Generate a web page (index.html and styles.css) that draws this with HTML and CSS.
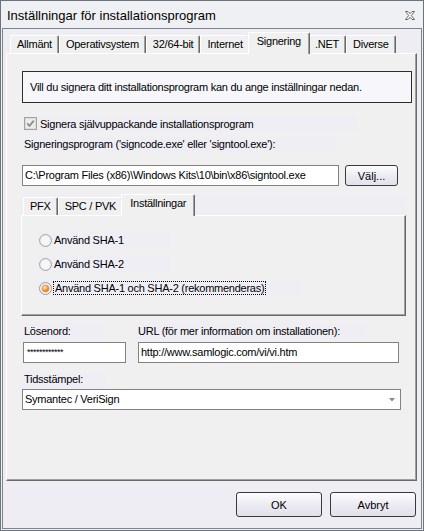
FILE: index.html
```html
<!DOCTYPE html>
<html lang="sv">

<head>
  <meta charset="UTF-8">
  <title>Inställningar för installationsprogram</title>
  <link rel="stylesheet" href="styles.css">
</head>

<body>
  <div class="window">
    <div class="titlebar">
      <span class="title">Inställningar för installationsprogram</span>
      <svg class="close" width="10" height="9" viewBox="0 0 10 9">
        <path d="M0.5 0.5h2.5l2 2.2 2-2.2h2.5l-3.2 4 3.2 4h-2.5l-2-2.2-2 2.2h-2.5l3.2-4z" fill="#fbfbfb" stroke="#6a6a6a" stroke-linejoin="round"/>
      </svg>
    </div>
    <div class="client">
      <div class="tabs">
        <div class="tab">Allmänt</div>
        <div class="tab">Operativsystem</div>
        <div class="tab">32/64-bit</div>
        <div class="tab">Internet</div>
        <div class="tab tab-active">Signering</div>
        <div class="tab">.NET</div>
        <div class="tab">Diverse</div>
      </div>
      <div class="panel">
        <div class="info">Vill du signera ditt installationsprogram kan du ange inställningar nedan.</div>
        <div class="check">
          <svg width="13" height="13" viewBox="0 0 13 13">
            <rect x="0.5" y="0.5" width="12" height="12" fill="#ececec" stroke="#a2a2a2"/>
            <rect x="1.5" y="1.5" width="10" height="10" fill="none" stroke="#dcdcdc"/>
            <path d="M3.2 6.3l2.3 2.5 4.3-5.2" fill="none" stroke="#8d8d8d" stroke-width="1.8"/>
          </svg>
          <span>Signera självuppackande installationsprogram</span>
        </div>
        <div class="label label-sign">Signeringsprogram ('signcode.exe' eller 'signtool.exe'):</div>
        <div class="path-row">
          <div class="field field-path">C:\Program Files (x86)\Windows Kits\10\bin\x86\signtool.exe</div>
          <button class="btn btn-small">Välj...</button>
        </div>
        <div class="subtabs">
          <div class="tab">PFX</div>
          <div class="tab">SPC / PVK</div>
          <div class="tab tab-active">Inställningar</div>
        </div>
        <div class="subpanel">
          <div class="radio">
            <svg width="13" height="13" viewBox="0 0 13 13">
              <circle cx="6.5" cy="6.5" r="6" fill="#e9e9e9" stroke="#a7a7a7"/>
              <circle cx="6.5" cy="6.5" r="4.5" fill="#f6f6f6"/>
            </svg>
            <span>Använd SHA-1</span>
          </div>
          <div class="radio">
            <svg width="13" height="13" viewBox="0 0 13 13">
              <circle cx="6.5" cy="6.5" r="6" fill="#e9e9e9" stroke="#a7a7a7"/>
              <circle cx="6.5" cy="6.5" r="4.5" fill="#f6f6f6"/>
            </svg>
            <span>Använd SHA-2</span>
          </div>
          <div class="radio radio-wide">
            <svg width="13" height="13" viewBox="0 0 13 13">
              <defs>
                <radialGradient id="dot" cx="0.4" cy="0.35" r="0.7">
                  <stop offset="0" stop-color="#ffe7c4"/>
                  <stop offset="0.5" stop-color="#f7a048"/>
                  <stop offset="1" stop-color="#d85e10"/>
                </radialGradient>
              </defs>
              <circle cx="6.5" cy="6.5" r="6" fill="#f2f2f2" stroke="#9a9a9a"/>
              <circle cx="6.5" cy="6.5" r="3.6" fill="url(#dot)" stroke="#e7a060" stroke-width="0.8"/>
            </svg>
            <span class="focus">Använd SHA-1 och SHA-2 (rekommenderas)</span>
          </div>
        </div>
        <div class="cred-row">
          <div class="cred-col">
            <div class="label label-pass">Lösenord:</div>
            <div class="field field-pass"><span class="stars">************</span></div>
          </div>
          <div class="cred-col">
            <div class="label label-url">URL (för mer information om installationen):</div>
            <div class="field field-url">http://www.samlogic.com/vi/vi.htm</div>
          </div>
        </div>
        <div class="label label-time">Tidsstämpel:</div>
        <div class="field select">
          <span>Symantec / VeriSign</span>
          <svg width="6" height="4" viewBox="0 0 6 4"><path d="M0 0h6l-3 3.5z" fill="#8a8a8a"/></svg>
        </div>
      </div>
      <div class="footer">
        <button class="btn">OK</button>
        <button class="btn">Avbryt</button>
      </div>
    </div>
  </div>
</body>

</html>
```

FILE: styles.css
```css
*,
*::before,
*::after {
  margin: 0;
  padding: 0;
  box-sizing: border-box;
}
body {
  font-family: "Liberation Sans", Arial, sans-serif;
  font-size: 11px;
  letter-spacing: -0.25px;
  color: #000;
  background: #fff;
}
.window {
  display: flex;
  flex-direction: column;
  width: 424px;
  height: 531px;
  padding: 0 1px 1px;
  border: 1px solid #6b747d;
  background: #eff0f3;
}
.titlebar {
  display: flex;
  align-items: center;
  justify-content: space-between;
  height: 27px;
  padding: 2px 7px 0 5px;
}
.title {
  font-size: 13px;
  letter-spacing: 0;
}
.client {
  flex: 1;
  display: flex;
  flex-direction: column;
  border: 1px solid #7b848d;
  background: #eeedf4;
}
.tabs,
.subtabs {
  display: flex;
  align-items: flex-end;
}
.tabs {
  height: 24px;
  margin: 0 4px 0 3px;
  padding-left: 4px;
}
.tab {
  height: 18px;
  padding: 0 6px;
  line-height: 16px;
  border-top: 1px solid #fff;
  border-left: 1px solid #fff;
  border-right: 1px solid #696969;
  border-radius: 2px 2px 0 0;
  box-shadow: inset -1px 0 #a0a0a0;
  background: #f0f0f0;
}
.tab-active {
  position: relative;
  z-index: 1;
  height: 22px;
  margin: 0 -2px -1px;
  padding: 0 8px 4px;
  line-height: 17px;
}
.panel {
  height: 428px;
  margin: 0 4px 0 3px;
  border: 1px solid;
  border-color: #fff #696969 #696969 #fff;
  box-shadow: inset -1px -1px #a0a0a0;
  background: #f0f0f0;
}
.info {
  width: 390px;
  height: 32px;
  margin: 17px 0 0 15px;
  padding-left: 7px;
  line-height: 30px;
  border: 1px solid #2e2e2e;
  background: #f7f7fb;
}
.check,
.radio {
  display: flex;
  align-items: center;
  padding-left: 2px;
  background: #efeef5;
}
.check {
  width: 335px;
  height: 15px;
  margin: 13px 0 0 15px;
  gap: 3px;
}
.label {
  height: 15px;
  margin-left: 15px;
  padding-left: 2px;
  line-height: 15px;
  background: #efeef5;
}
.label-sign {
  width: 313px;
  margin-top: 6px;
}
.path-row {
  display: flex;
  gap: 6px;
  margin: 13px 0 0 15px;
}
.field {
  height: 21px;
  padding-left: 2px;
  line-height: 19px;
  border: 1px solid #828282;
  background: #fff;
  white-space: nowrap;
  overflow: hidden;
}
.field-path {
  width: 317px;
}
.btn {
  width: 86px;
  height: 25px;
  font: inherit;
  color: #000;
  border: 1px solid #3a3a3a;
  border-radius: 3px;
  background: linear-gradient(#fdfdff, #ebeaf2 55%, #e2e1ec);
}
.btn-small {
  width: 53px;
  height: 21px;
}
.subtabs {
  width: 385px;
  height: 21px;
  margin: 8px 0 0 14px;
  padding-left: 2px;
  background: #efeef5;
}
.subpanel {
  width: 385px;
  height: 101px;
  margin-left: 14px;
  padding-top: 16px;
  border: 1px solid;
  border-color: #fff #696969 #696969 #fff;
  box-shadow: inset -1px -1px #a0a0a0;
  background: #f0f0f0;
}
.radio {
  width: 134px;
  height: 16px;
  margin: 0 0 8px 15px;
  gap: 2px;
}
.radio-wide {
  width: 265px;
  gap: 1px;
}
.focus {
  padding: 0 1px;
  line-height: 12px;
  border: 1px dotted #000;
}
.cred-row {
  display: flex;
  gap: 10px;
  margin: 7px 0 0 15px;
}
.cred-col .label {
  height: 17px;
  margin-left: 0;
  line-height: 17px;
}
.cred-col .field {
  margin-top: 2px;
}
.label-pass {
  width: 82px;
}
.field-pass {
  width: 103px;
  margin-left: 1px;
  padding-left: 3px;
}
.stars {
  font-size: 9px;
  letter-spacing: -0.5px;
  vertical-align: top;
}
.label-url {
  width: 230px;
}
.field-url {
  width: 261px;
  margin-left: 2px;
}
.label-time {
  width: 85px;
  height: 16px;
  margin-top: 9px;
}
.select {
  display: flex;
  align-items: center;
  justify-content: space-between;
  width: 379px;
  margin: 1px 0 0 15px;
  padding: 0 5px 0 2px;
}
.footer {
  display: flex;
  justify-content: flex-end;
  gap: 8px;
  padding: 11px 5px 0 0;
}
```
